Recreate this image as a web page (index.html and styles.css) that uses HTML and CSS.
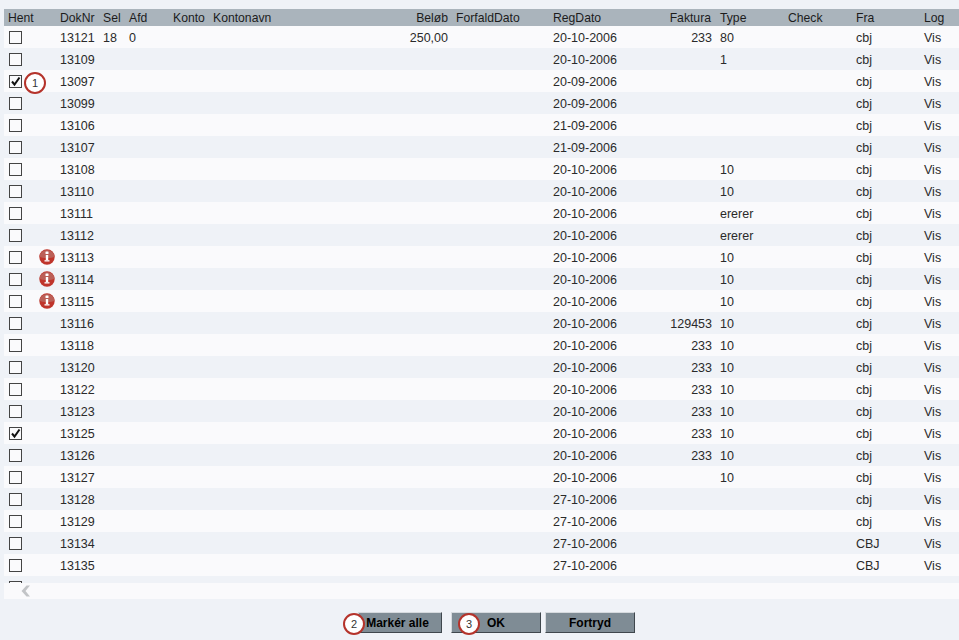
FILE: index.html
```html
<!DOCTYPE html>
<html lang="da">
<head>
<meta charset="utf-8">
<title>Dokumenter</title>
<link rel="stylesheet" href="styles.css">
</head>
<body>
<svg class="defs" width="0" height="0" aria-hidden="true">
  <defs>
    <symbol id="warn" viewBox="0 0 16 16">
      <circle cx="8" cy="8" r="7.700" fill="#bf342b"/>
      <path d="M.4 7.500A7.700 7.700 0 0 1 15.600 7.500C13 9.500 3 9.500 .4 7.500Z" fill="#bb5f57"/>
      <rect x="6.500" y="2.500" width="3" height="2.500" rx=".5" fill="#fff"/>
      <rect x="6.800" y="6" width="2.400" height="5" fill="#fff"/>
      <rect x="5.500" y="11" width="5" height="1.600" fill="#f4dedc"/>
    </symbol>
  </defs>
</svg>
<main class="page">
  <div class="viewport">
    <div class="head row">
      <span class="hent">Hent</span><span>DokNr</span><span>Sel</span><span>Afd</span><span>Konto</span><span>Kontonavn</span><span class="num">Beløb</span><span>ForfaldDato</span><span>RegDato</span><span class="num">Faktura</span><span>Type</span><span>Check</span><span>Fra</span><span>Log</span>
    </div>
    <div id="rows"></div>
  </div>
  <div class="hscroll"><svg class="chev" width="10" height="12" viewBox="0 0 10 12"><path d="M9 .5 4.500 6 9 11.500H5.500L.5 6l5-5.500Z" fill="#c2c4c7"/></svg></div>
  <div class="actions">
    <button class="btn btn-first" type="button">Markér alle<span class="mark mark-btn">2</span></button>
    <button class="btn" type="button">OK<span class="mark mark-ok">3</span></button>
    <button class="btn" type="button">Fortryd</button>
  </div>
</main>
<script src="rows.js"></script>
</body>
</html>
```
FILE: rows.js
```js
var d = [
  ["13121","18","0","250,00","20-10-2006","233","80","cbj"],
  ["13109","","","","20-10-2006","","1","cbj"],
  ["13097","","","","20-09-2006","","","cbj","c1"],
  ["13099","","","","20-09-2006","","","cbj"],
  ["13106","","","","21-09-2006","","","cbj"],
  ["13107","","","","21-09-2006","","","cbj"],
  ["13108","","","","20-10-2006","","10","cbj"],
  ["13110","","","","20-10-2006","","10","cbj"],
  ["13111","","","","20-10-2006","","ererer","cbj"],
  ["13112","","","","20-10-2006","","ererer","cbj"],
  ["13113","","","","20-10-2006","","10","cbj","w"],
  ["13114","","","","20-10-2006","","10","cbj","w"],
  ["13115","","","","20-10-2006","","10","cbj","w"],
  ["13116","","","","20-10-2006","129453","10","cbj"],
  ["13118","","","","20-10-2006","233","10","cbj"],
  ["13120","","","","20-10-2006","233","10","cbj"],
  ["13122","","","","20-10-2006","233","10","cbj"],
  ["13123","","","","20-10-2006","233","10","cbj"],
  ["13125","","","","20-10-2006","233","10","cbj","c"],
  ["13126","","","","20-10-2006","233","10","cbj"],
  ["13127","","","","20-10-2006","","10","cbj"],
  ["13128","","","","27-10-2006","","","cbj"],
  ["13129","","","","27-10-2006","","","cbj"],
  ["13134","","","","27-10-2006","","","CBJ"],
  ["13135","","","","27-10-2006","","","CBJ"],
  ["","","","","","","",""]
];
var html = "";
d.forEach(function (r, i) {
  var f = r[8] || "";
  var checked = f === "c" || f === "c1";
  html += '<div class="row ' + (i % 2 ? "even" : "odd") + '"><span class="hent">' +
    '<span class="box' + (checked ? " on" : "") + '">' +
    (checked ? '<svg width="11" height="11" viewBox="0 0 11 11"><path d="M2 5.500 4.500 8.500 9.500 1.500" fill="none" stroke="#111" stroke-width="2"/></svg>' : "") +
    "</span>" +
    (f === "w" ? '<svg class="warn" width="16" height="16"><use href="#warn"/></svg>' : "") +
    (f === "c1" ? '<span class="mark mark-row">1</span>' : "") +
    "</span><span>" + r[0] + "</span><span>" + r[1] + "</span><span>" + r[2] +
    '</span><span></span><span></span><span class="num">' + r[3] +
    "</span><span></span><span>" + r[4] + '</span><span class="num">' + r[5] +
    "</span><span>" + r[6] + "</span><span></span><span>" + r[7] + "</span><span>" + (r[0] ? "Vis" : "") + "</span></div>";
});
document.getElementById("rows").innerHTML = html;
```
FILE: styles.css
```css
* { box-sizing: border-box; }
html, body { margin: 0; height: 100%; }
body {
  background: #eff2f7;
  font-family: "Liberation Sans", Arial, sans-serif;
  font-size: 12.500px;
  color: #2a2a2a;
  overflow: hidden;
}
.defs { position: absolute; }
.page {
  display: flex;
  flex-direction: column;
  height: 640px;
  padding: 9px 0 0 4px;
}
.viewport {
  height: 574px;
  overflow: hidden;
}
.row {
  display: grid;
  grid-template-columns: 52px 43px 26px 44px 40px 161px 82px 97px 98px 69px 68px 68px 68px 39px;
  height: 22px;
  align-items: center;
  line-height: 14px;
  padding-top: 1px;
}
.row > span { padding-left: 4px; white-space: nowrap; }
.row > .num { padding: 0 4px 0 0; text-align: right; }
.head { height: 17px; background: #aab4bc; color: #1c1c1c; font-size: 12.200px; padding-top: 0; }
.head > .num:nth-child(10) { padding-right: 5px; }
.odd { background: #fafafc; }
.even { background: #eff2f7; }
.hent { position: relative; height: 100%; display: flex; align-items: center; }
.head .hent { height: auto; }
.box {
  display: block;
  width: 13px;
  height: 13px;
  margin: 0 0 1px 1px;
  border: 1px solid #444;
  background: #fafafc;
  position: relative;
}
.box svg { position: absolute; left: 0; top: 0; }
.warn { position: absolute; left: 35px; top: 2px; }
.mark {
  position: absolute;
  width: 22px;
  height: 22px;
  border: 2px solid #b5332b;
  border-radius: 50%;
  background: #fff;
  color: #333;
  font-size: 11px;
  font-weight: normal;
  line-height: 18px;
  text-align: center;
}
.mark-row { left: 20px; top: 1px; }
.mark-btn { left: -16px; top: 0; }
.mark-ok { left: 6px; top: 0; }
.hscroll {
  height: 16px;
  background: #fafafc;
  display: flex;
  align-items: center;
  padding-left: 17px;
}
.actions {
  display: flex;
  justify-content: flex-start;
  gap: 4px;
  padding: 13px 0 0 354px;
}
.btn {
  position: relative;
  width: 90px;
  height: 21px;
  padding: 0;
  border: 1px solid;
  border-color: #d6dade #3f474d #3f474d #d6dade;
  background: #7f8c95;
  color: #000;
  font: bold 12px "Liberation Sans", Arial, sans-serif;
}
.btn-first { width: 84px; margin-right: 5px; padding-right: 5px; }
```
